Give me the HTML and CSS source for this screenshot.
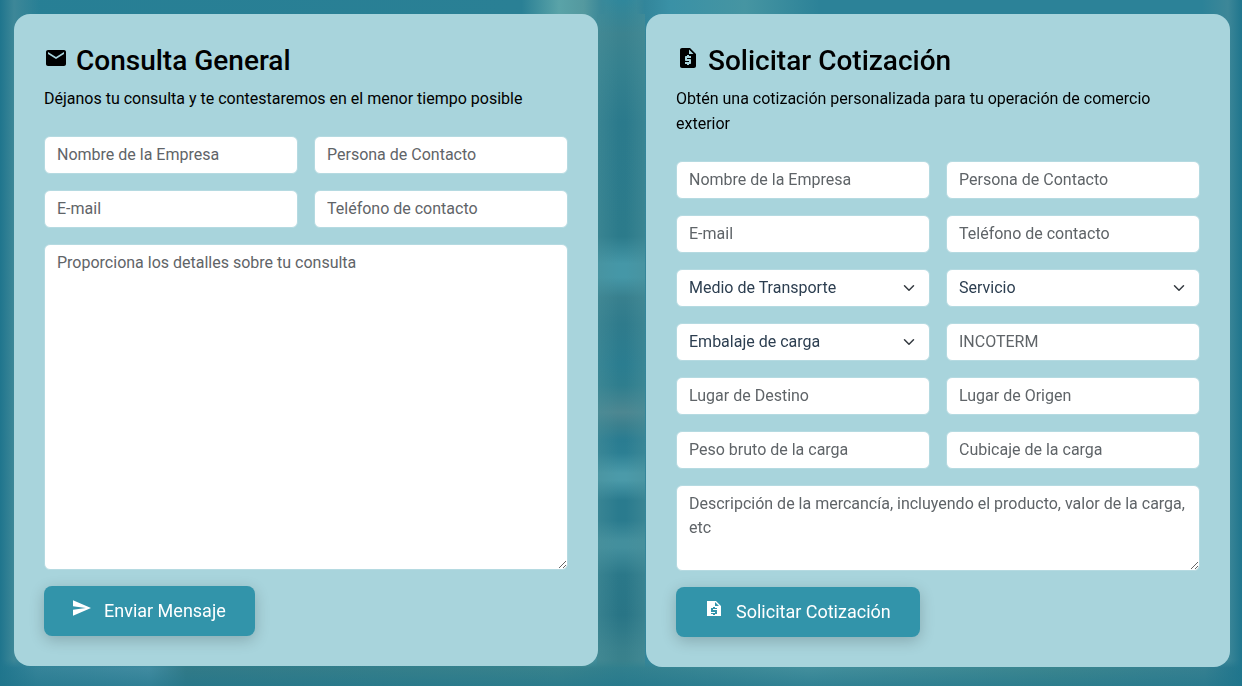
FILE: index.html
```html
<!DOCTYPE html>
<html lang="es">
<head>
<meta charset="utf-8">
<meta name="viewport" content="width=device-width, initial-scale=1">
<title>Contacto</title>
<link rel="stylesheet" href="styles.css">
</head>
<body>
<div class="backdrop" aria-hidden="true">
  <div class="channel"></div>
</div>
<main class="forms">
  <section class="card">
    <h3 class="title">
      <svg class="title-icon" viewBox="0 0 24 24" aria-hidden="true"><path d="M20 4H4c-1.1 0-1.99.9-1.99 2L2 18c0 1.1.9 2 2 2h16c1.1 0 2-.9 2-2V6c0-1.1-.9-2-2-2zm0 4l-8 5-8-5V6l8 5 8-5v2z"/></svg>
      Consulta General
    </h3>
    <p class="lead">Déjanos tu consulta y te contestaremos en el menor tiempo posible</p>
    <form class="form">
      <input class="field" type="text" placeholder="Nombre de la Empresa" aria-label="Nombre de la Empresa">
      <input class="field" type="text" placeholder="Persona de Contacto" aria-label="Persona de Contacto">
      <input class="field" type="email" placeholder="E-mail" aria-label="E-mail">
      <input class="field" type="tel" placeholder="Teléfono de contacto" aria-label="Teléfono de contacto">
      <textarea class="field wide" rows="13" placeholder="Proporciona los detalles sobre tu consulta" aria-label="Detalles de la consulta"></textarea>
      <button class="submit" type="button">
        <svg class="submit-icon" viewBox="2 2 21 20" aria-hidden="true"><path d="M2.01 21L23 12 2.01 3 2 10l15 2-15 2z"/></svg>
        Enviar Mensaje
      </button>
    </form>
  </section>

  <section class="card">
    <h3 class="title">
      <svg class="title-icon" viewBox="0 0 24 24" aria-hidden="true"><path d="M14 2H6c-1.1 0-1.99.9-1.99 2L4 20c0 1.1.89 2 1.99 2H18c1.1 0 2-.9 2-2V8l-6-6zm1 10h-4v1h3c.55 0 1 .45 1 1v3c0 .55-.45 1-1 1h-1v1h-2v-1H9v-2h4v-1h-3c-.55 0-1-.45-1-1v-3c0-.55.45-1 1-1h1V9h2v1h2v2zm-2-4V3.5L17.5 8H13z"/></svg>
      Solicitar Cotización
    </h3>
    <p class="lead">Obtén una cotización personalizada para tu operación de comercio exterior</p>
    <form class="form">
      <input class="field" type="text" placeholder="Nombre de la Empresa" aria-label="Nombre de la Empresa">
      <input class="field" type="text" placeholder="Persona de Contacto" aria-label="Persona de Contacto">
      <input class="field" type="email" placeholder="E-mail" aria-label="E-mail">
      <input class="field" type="tel" placeholder="Teléfono de contacto" aria-label="Teléfono de contacto">
      <div class="select-box">
        <select class="field" aria-label="Medio de Transporte"><option>Medio de Transporte</option></select>
        <svg class="chevron" viewBox="0 0 16 16" aria-hidden="true"><path d="m2 5 6 6 6-6"/></svg>
      </div>
      <div class="select-box">
        <select class="field" aria-label="Servicio"><option>Servicio</option></select>
        <svg class="chevron" viewBox="0 0 16 16" aria-hidden="true"><path d="m2 5 6 6 6-6"/></svg>
      </div>
      <div class="select-box">
        <select class="field" aria-label="Embalaje de carga"><option>Embalaje de carga</option></select>
        <svg class="chevron" viewBox="0 0 16 16" aria-hidden="true"><path d="m2 5 6 6 6-6"/></svg>
      </div>
      <input class="field" type="text" placeholder="INCOTERM" aria-label="INCOTERM">
      <input class="field" type="text" placeholder="Lugar de Destino" aria-label="Lugar de Destino">
      <input class="field" type="text" placeholder="Lugar de Origen" aria-label="Lugar de Origen">
      <input class="field" type="text" placeholder="Peso bruto de la carga" aria-label="Peso bruto de la carga">
      <input class="field" type="text" placeholder="Cubicaje de la carga" aria-label="Cubicaje de la carga">
      <textarea class="field wide" rows="3" placeholder="Descripción de la mercancía, incluyendo el producto, valor de la carga, etc" aria-label="Descripción de la mercancía"></textarea>
      <button class="submit" type="button">
        <svg class="submit-icon" viewBox="0 0 18 18" aria-hidden="true"><path fill-rule="evenodd" d="M2 1h9l5 5v10H2zM10 2v4h4zM8 7v1H6v4h4v1H6v1h2v1h2v-1h2v-4H8v-1h4V8h-2V7z"/></svg>
        Solicitar Cotización
      </button>
    </form>
  </section>
</main>
</body>
</html>
```
FILE: styles.css
```css
* {
  box-sizing: border-box;
}

body {
  margin: 0;
  min-height: 100vh;
  overflow-x: hidden;
  background: #2f8093;
  color: #000;
  font: 16px/24px Roboto, sans-serif;
}

/* Soft, out-of-focus backdrop behind the cards */
.backdrop {
  position: fixed;
  inset: 0;
  z-index: -1;
  overflow: hidden;
  background:
    linear-gradient(90deg, #1f758d 0, #3d8798 14px, transparent 40px, transparent calc(100% - 40px), #3d8798 calc(100% - 14px), #1f758d 100%),
    linear-gradient(90deg, #277f95 0, #2a8095 42%, #5aa3a8 45%, #54999f 47%, #2f8095 49%, #2f8095 51%, #3a91a6 54%, #4695a2 60%, #2c8298 66%, #2c8298 100%);
}

.backdrop::after {
  content: "";
  position: absolute;
  inset: auto 0 0;
  height: 26px;
  background:
    linear-gradient(0deg, #20758b99, transparent),
    linear-gradient(90deg, #1f758d 0, #3a879c 3%, #4890a5 12%, #357b87 15%, #3d858d 45%, #34818e 50%, #4a94a0 65%, #40888f 85%, #3a8292 97%, #1f758d 100%);
  mask-image: linear-gradient(0deg, #000 18px, transparent);
}

.channel {
  position: absolute;
  inset: 0 0 10px;
  margin: auto;
  width: 48px;
  background:
    linear-gradient(90deg, #4b909a77, transparent 45%, transparent 60%, #4b909a77),
    linear-gradient(180deg, #30879b 0, #3c838f 5%, #35818f 10%, #2b7a8c 18%, #2c7b8b 35%, #4597a7 39%, #4597a7 41%, #38808e 44%, #2f7b8c 48%, #2b7d90 54%, #2f7e8e 57%, #4d8791 61%, #3a808e 63%, #2a7c91 65%, #2c7f93 67%, #4b9aa9 70%, #4b9aa9 71%, #2a7b8e 74%, #2a7b8e 77%, #438f9d 80%, #438f9d 81%, #2b7889 85%, #297586 91%, #38808c 96%, #3b838c 100%);
  mask-image: linear-gradient(90deg, transparent, #000 8px, #000 calc(100% - 8px), transparent), linear-gradient(0deg, #000, #000);
  mask-size: 100% 14px, 100% calc(100% - 14px);
  mask-position: top, bottom;
  mask-repeat: no-repeat;
}

.forms {
  display: grid;
  grid-template-columns: 1fr 1fr;
  align-items: start;
  gap: 48px;
  padding: 14px 12px 14px 14px;
}

.card {
  padding: 30px;
  border-radius: 16px;
  background: #a8d4dc;
}

.title {
  display: flex;
  align-items: center;
  gap: 8px;
  margin: 0 0 8px;
  font-size: 28px;
  font-weight: 500;
  line-height: 34px;
}

.title-icon {
  flex: none;
  width: 24px;
  height: 24px;
  margin-bottom: 6px;
}

.lead {
  margin: 0 0 25px;
  line-height: 25px;
}

.form {
  display: grid;
  grid-template-columns: 1fr 1fr;
  gap: 16px;
}

.field {
  display: block;
  width: 100%;
  min-width: 0;
  padding: 6px 12px;
  border: 1px solid #b5dae1;
  border-radius: 6px;
  background: #fff;
  color: #2c3e50;
  font: inherit;
}

.field::placeholder {
  color: #5f6468;
  opacity: 1;
}

.wide {
  grid-column: 1 / -1;
  resize: vertical;
}

.select-box {
  display: grid;
  align-items: center;
}

.select-box > * {
  grid-area: 1 / 1;
}

.select-box .field {
  appearance: none;
}

.chevron {
  justify-self: end;
  width: 12px;
  height: 16px;
  margin-right: 15px;
  fill: none;
  stroke: #343a40;
  stroke-width: 2;
  stroke-linecap: round;
  stroke-linejoin: round;
  pointer-events: none;
}

.submit {
  grid-column: 1 / -1;
  justify-self: start;
  display: flex;
  align-items: center;
  gap: 13px;
  padding: 12px 29px;
  border: 0;
  border-radius: 8px;
  background: #3294aa;
  box-shadow: 0 4px 15px rgb(0 0 0 / 20%);
  color: #fff;
  font: 400 18px/26px Roboto, sans-serif;
}

.submit-icon {
  flex: none;
  width: 18px;
  height: 18px;
  margin-bottom: 6px;
  fill: currentColor;
}
```
